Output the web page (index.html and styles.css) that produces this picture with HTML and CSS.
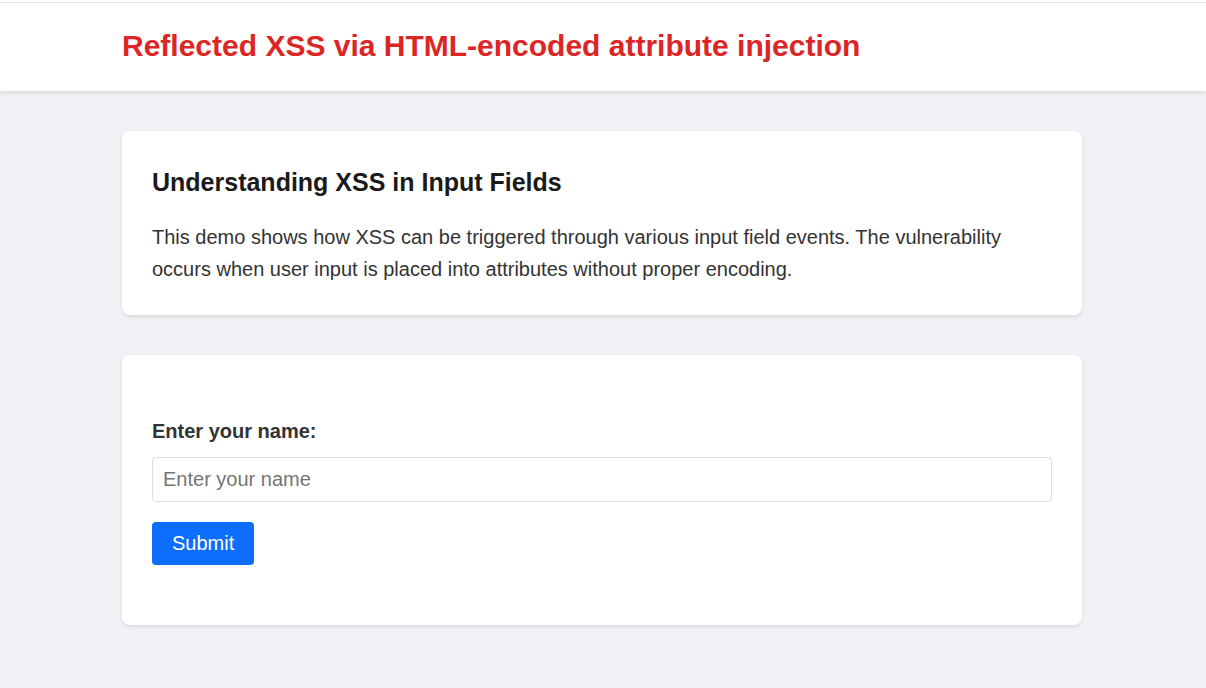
FILE: index.html
```html
<!DOCTYPE html>
<html lang="en">
<head>
<meta charset="utf-8">
<title>Reflected XSS via HTML-encoded attribute injection</title>
<link rel="stylesheet" href="styles.css">
</head>
<body>
<header class="site-header">
  <div class="container">
    <h1 class="title">Reflected XSS via HTML-encoded attribute injection</h1>
  </div>
</header>
<main class="container main">
  <section class="card">
    <h2 class="card-title">Understanding XSS in Input Fields</h2>
    <p class="card-text">This demo shows how XSS can be triggered through various input field events. The vulnerability occurs when user input is placed into attributes without proper encoding.</p>
  </section>
  <section class="card">
    <form class="form">
      <label class="label" for="name">Enter your name:</label>
      <input class="input" id="name" type="text" placeholder="Enter your name">
      <button class="btn" type="button">Submit</button>
    </form>
  </section>
</main>
</body>
</html>
```
FILE: styles.css
```css
* { box-sizing: border-box; }
html, body { margin: 0; padding: 0; }
body {
  background: #f0f2f5;
  font-family: "Liberation Sans", Arial, sans-serif;
  color: #333;
  line-height: 1.6;
}
.container {
  width: 960px;
  margin-left: calc(50% - 481px);
}
.site-header {
  background: #fff;
  border-top: 2px solid #fff;
  box-shadow: inset 0 1px 0 #e4e4e4, 0 2px 4px rgba(0,0,0,0.1);
  padding: 20px 0;
  height: 91px;
}
.title {
  margin: 0;
  color: #dc2626;
  font-size: 30px;
  font-weight: bold;
  line-height: 48px;
}
.main {
  padding-top: 40px;
}
.card {
  background: #fff;
  border-radius: 8px;
  box-shadow: 0 2px 4px rgba(0,0,0,0.1);
  padding: 30px;
  margin-bottom: 40px;
}
.card-title {
  margin: 0 0 17px;
  font-size: 25px;
  color: #1a1a1a;
  line-height: 43px;
}
.card-text {
  margin: 0;
  font-size: 20px;
  line-height: 32px;
}
.form {
  margin: 30px 0;
  display: flex;
  flex-direction: column;
  align-items: flex-start;
}
.label {
  font-size: 20px;
  font-weight: bold;
  line-height: 32px;
  margin-bottom: 10px;
}
.input {
  width: 100%;
  height: 45px;
  padding: 0 10px;
  font-family: inherit;
  font-size: 20px;
  color: #333;
  border: 1px solid #ddd;
  border-radius: 4px;
  margin-bottom: 20px;
}
.input::placeholder { color: #757575; }
.btn {
  background: #0d6efd;
  color: #fff;
  border: none;
  border-radius: 4px;
  font-family: inherit;
  font-size: 20px;
  height: 43px;
  padding: 0 20px;
}
```
